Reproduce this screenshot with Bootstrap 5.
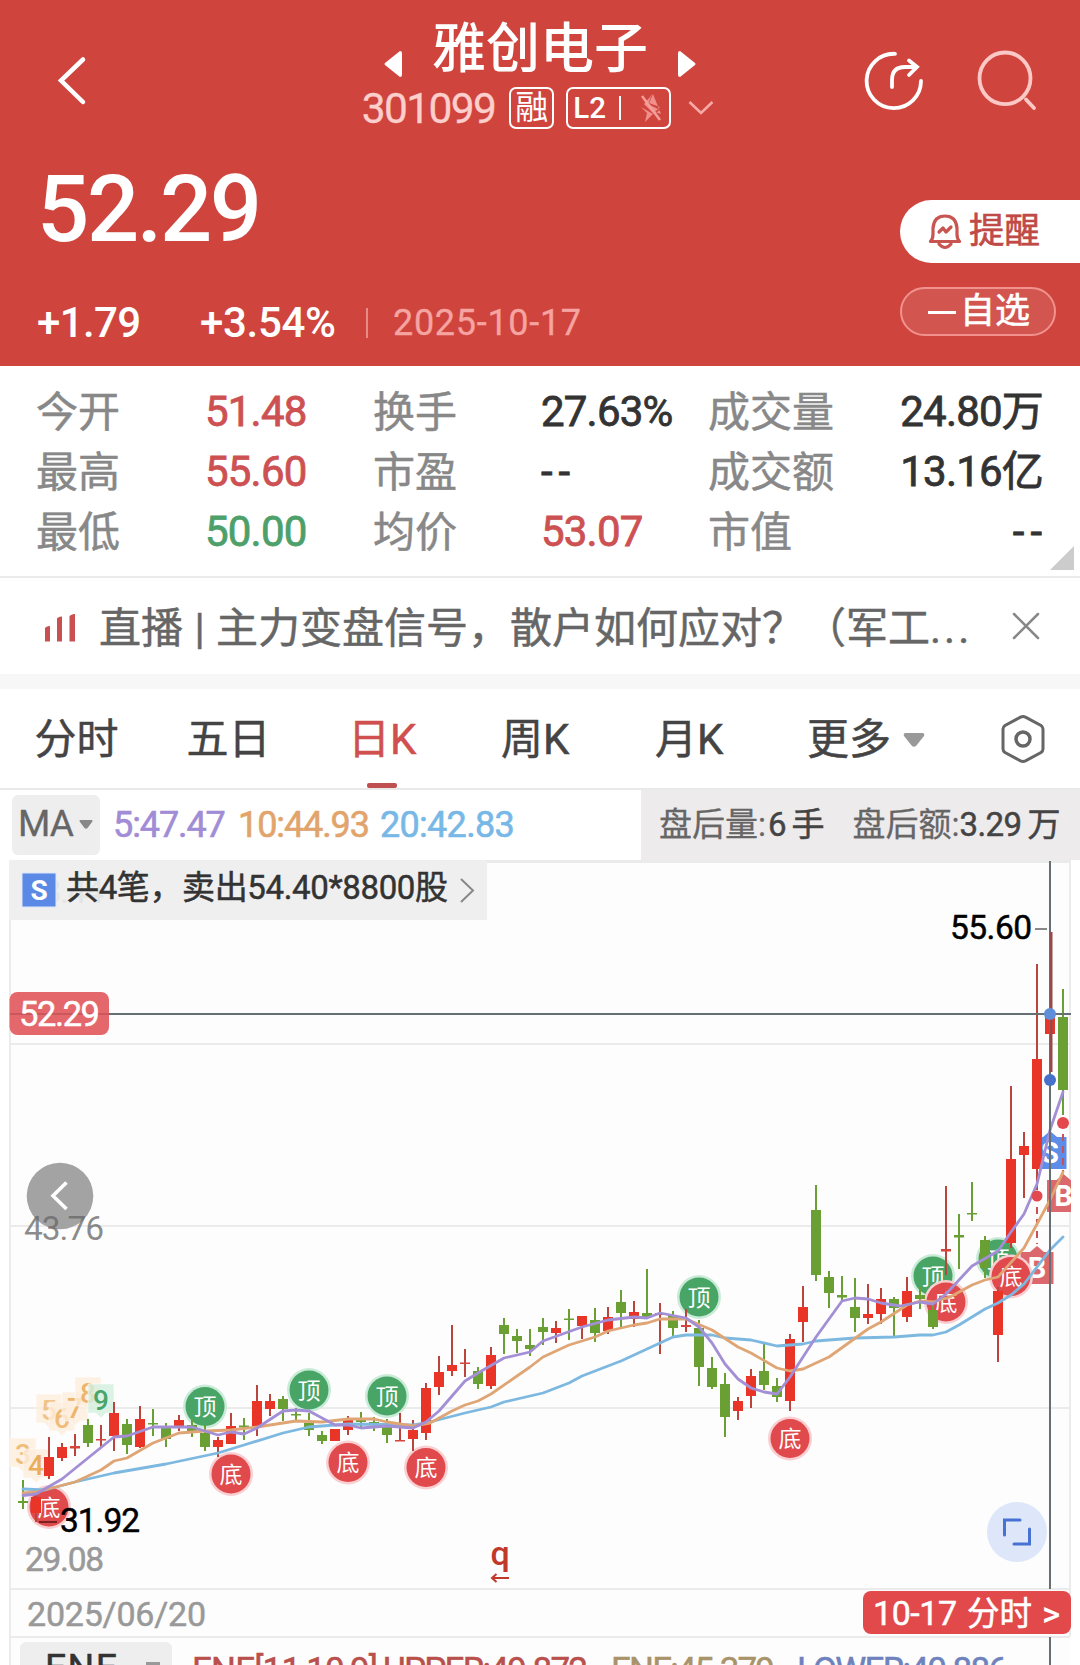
<!DOCTYPE html>
<html lang="zh-CN">
<head>
<meta charset="utf-8">
<meta name="viewport" content="width=device-width, initial-scale=1">
<title>雅创电子 301099</title>
<link rel="stylesheet" href="https://cdn.jsdelivr.net/npm/bootstrap@5.3.0/dist/css/bootstrap.min.css">
<style>
body{font-family:Roboto,"Noto Sans CJK SC",sans-serif;width:1080px;height:1665px;overflow:hidden;background:#fff;color:#333}
svg{display:block;flex:none}
svg text{font-family:Roboto,"Noto Sans CJK SC",sans-serif}
.hero{height:366px;background:#cf453e;color:#fff}
.hero-top{display:grid;grid-template-columns:1fr auto 1fr;height:150px}
.stock-name{font-size:54px;line-height:64px;font-weight:500}
.code{font-size:42.5px;line-height:44px;height:42px;color:#fccfcc;letter-spacing:-1.6px;-webkit-text-stroke:.3px #fccfcc}
.tagbox{height:42px;border:2px solid #fff;border-radius:7px;line-height:38px}
.price{font-size:92px;line-height:92px;font-weight:500;letter-spacing:-2.4px}
.delta{font-size:42px;line-height:42px;font-weight:500;letter-spacing:-.6px}
.day{font-size:36px;line-height:42px;color:#f5a4a1;letter-spacing:.7px;-webkit-text-stroke:.3px #f5a4a1}
.remind{width:180px;height:63px;border-radius:32px 0 0 32px;background:#fff;color:#c04a45;font-size:35.5px;line-height:65px;-webkit-text-stroke:.6px #c04a45}
.fav{width:156px;height:49px;border:2px solid #f1928f;border-radius:25px;background:#d2554f;font-size:35px;line-height:43px;-webkit-text-stroke:.6px #fff}
.quotes{display:grid;grid-template-columns:169px 168px 168px 167px 1fr auto;grid-auto-flow:column;grid-template-rows:repeat(3,60px);height:212px;padding:16px 37px 0 36px;border-bottom:2px solid #ebebeb;font-size:42px;line-height:60px;position:relative;-webkit-text-stroke:.5px}
.quotes>*{white-space:nowrap}
.ql{color:#888;line-height:62px;height:60px}
.qv{letter-spacing:-.8px;color:#333;-webkit-text-stroke:.8px}
.up{color:#cd5152}.down{color:#4ea06a}
.fold{position:absolute;right:6px;bottom:6px}
.live{height:96px;font-size:42px;color:#666;-webkit-text-stroke:.5px #666}
.live-text{line-height:96px;height:90px;margin-left:-1px}
.band{height:15px;background:#f7f7f7}
.tabs{height:101px;border-bottom:2px solid #e9e9e9;font-size:42px;line-height:102px;color:#444;-webkit-text-stroke:.5px}
.tabs .on{color:#d0504f;position:relative}
.tabs .on::after{content:"";position:absolute;left:19px;bottom:0;width:30px;height:5px;border-radius:2px;background:#c0504f}
.marow{height:70px}
.mabtn{width:88px;height:60px;margin:5px 0 0 12px;background:#eee;border-radius:6px;font-size:37px;line-height:58px;color:#666;-webkit-text-stroke:.3px #666}
.mav{font-size:36px;line-height:70px;-webkit-text-stroke:.6px}
.after{width:439px;background:#eeebec;font-size:33px;line-height:70px;color:#666;white-space:nowrap;-webkit-text-stroke:.3px}
.after b{font-weight:400;color:#444;-webkit-text-stroke:.5px}
</style>
<script src="https://cdn.jsdelivr.net/npm/bootstrap@5.3.0/dist/js/bootstrap.bundle.min.js"></script>
</head>
<body>
<header class="hero d-flex flex-column">
  <div class="hero-top">
    <div class="d-flex"><svg width="40" height="60" class="ms-5" style="margin-top:50px" viewBox="48 51 40 60" fill="none" stroke="#fff" stroke-width="4.5" stroke-linecap="round"><path d="M83 60.500 61 81.500 83 103"/></svg></div>
    <div class="d-flex flex-column align-items-center">
      <div class="d-flex stock-name align-items-start" style="margin-top:18px">
        <svg width="18" height="26" style="margin:33px 30px 0 0"><path d="M16 0Q18 0 18 2V24Q18 26 16 26L1 14Q0 13 1 12Z" fill="#fff"/></svg>
        <span style="height:60px">雅创电子</span>
        <svg width="18" height="26" style="margin:33px 0 0 30px"><path d="M2 0Q0 0 0 2V24Q0 26 2 26L17 14Q18 13 17 12Z" fill="#fff"/></svg>
      </div>
      <div class="d-flex align-items-center" style="margin:9px 4px 0 0">
        <span class="code">301099</span>
        <span class="tagbox text-center" style="width:45px;margin-left:14px;font-size:33px">融</span>
        <span class="tagbox d-flex align-items-center" style="width:105px;margin-left:12px;padding-left:5px;font-size:29.500px;font-weight:500"><span>L2</span>
          <svg width="60" height="34" viewBox="606 91 60 34"><path d="M620 96v24" stroke="#fff" stroke-width="2"/><path d="M653 94 649 103 660 107 655 112 661 114M641 107 647 113 645 122 653 114 641 107ZM652 94 648 104 660 110 654 114 644 104 650 97Z" fill="#f08f8b"/><path d="M642 96 660 120" stroke="#f49f9b" stroke-width="2.500"/></svg></span>
        <svg width="26" height="16" style="margin-left:17px" fill="none" stroke="#f7aaa7" stroke-width="2.500"><path d="M1.500 2 13 13 24.500 2"/></svg>
      </div>
    </div>
    <div class="d-flex justify-content-end">
      <svg width="180" height="80" style="margin:40px 38px 0 0" viewBox="862 40 180 80" fill="none" stroke="#fff" stroke-width="3.800" stroke-linecap="round"><path d="M895 53.800A27.200 27.200 0 1 0 921 81M892 87V80Q892 67 905 67H916M909 60.500 917 67 909 75"/><g stroke="#fcc8c5"><ellipse cx="1005" cy="78.300" rx="25.500" ry="25.800"/><path d="M1026 99.500 1034 108"/></g></svg>
    </div>
  </div>
  <div class="d-flex justify-content-between flex-grow-1">
    <div style="padding-left:37px">
      <div class="price" style="margin-top:14px">52.29</div>
      <div class="d-flex align-items-center" style="margin:46px 0 0 0">
        <span class="delta" style="width:163px">+1.79</span><span class="delta" style="width:166px;letter-spacing:-.3px">+3.54%</span>
        <span style="width:2px;height:30px;background:#e88b87;margin-right:25px"></span><span class="day">2025-10-17</span>
      </div>
    </div>
    <div>
      <div class="remind d-flex align-items-center" style="margin-top:50px">
        <svg width="34" height="36" viewBox="0 0 34 36" style="margin:1px 7px 0 28px" fill="none" stroke="#c85550" stroke-width="3.200" stroke-linecap="round" stroke-linejoin="round"><path d="M2.500 27.500Q5 25 5 20V14Q6 2 17 2T29 14V20Q29 25 31.500 27.500ZM11 30Q17 37 23 30M11 18 15 14 18 18 23 13"/></svg><span>提醒</span>
      </div>
      <div class="fav d-flex align-items-center" style="margin-top:24px">
        <span style="width:28px;height:3.500px;background:#fff;margin:2px 4px 0 26px"></span><span>自选</span>
      </div>
    </div>
  </div>
</header>

<section class="quotes">
  <span class="ql">今开</span><span class="ql">最高</span><span class="ql">最低</span>
  <span class="qv up">51.48</span><span class="qv up">55.60</span><span class="qv down">50.00</span>
  <span class="ql">换手</span><span class="ql">市盈</span><span class="ql">均价</span>
  <span class="qv">27.63%</span><span class="qv" style="letter-spacing:6px">--</span><span class="qv up">53.07</span>
  <span class="ql">成交量</span><span class="ql">成交额</span><span class="ql">市值</span>
  <span class="qv text-end">24.80万</span><span class="qv text-end">13.16亿</span><span class="qv text-end" style="letter-spacing:6px;margin-right:-5px">--</span>
  <svg class="fold" width="24" height="24"><path d="M24 0V24H0Z" fill="#ccc"/></svg>
</section>

<section class="live d-flex align-items-center">
  <svg width="32" height="28" style="margin:4px 23px 0 45px" fill="#c95050"><path d="M0 14.500Q0 12.500 5 12V27.500H0ZM12 5Q12 3 17 2.500V27.500H12ZM24.500 2.500Q25 .5 30 0V27.500H24.500Z"/></svg>
  <span class="live-text text-nowrap">直播<span style="display:inline-block;width:33px;text-align:center">|</span>主力变盘信号，散户如何应对？（军工<span style="letter-spacing:3px">...</span></span>
  <svg width="28" height="28" style="margin:0 40px 0 auto" stroke="#888" stroke-width="2.500" stroke-linecap="round"><path d="M2 2 26 26M26 2 2 26"/></svg>
</section>
<div class="band"></div>

<nav class="tabs d-flex" style="padding-left:34.500px">
  <span style="width:152px">分时</span><span style="width:161.500px">五日</span><span class="on" style="width:153px">日K</span><span style="width:154px">周K</span><span style="width:152px">月K</span><span>更多</span>
  <svg width="22" height="14" style="margin:44px 0 0 12px"><path d="M2 0H20Q22 1 21 3L13 13Q11 14.500 9 13L1 3Q0 1 2 0Z" fill="#999"/></svg>
  <svg width="44" height="50" style="margin:25px 35px 0 auto" viewBox="0 0 44 50" fill="none" stroke="#666" stroke-width="3"><path d="M19.500 3.200Q22 2 24.500 3.200L40 11.500Q42 13 42 15V35Q42 37 40 38.500L24.500 46.800Q22 48 19.500 46.800L4 38.500Q2 37 2 35V15Q2 13 4 11.500Z"/><circle cx="22" cy="25" r="7" stroke-width="3.500"/></svg>
</nav>

<section class="marow d-flex">
  <div class="mabtn d-flex"><span style="margin:0 4px 0 6px;width:57px;letter-spacing:-.8px">MA</span><svg width="14" height="9" style="margin-top:25px"><path d="M1 0H13Q14 1 13 2L8.500 8Q7 9.500 5.500 8L1 2Q0 1 1 0Z" fill="#888"/></svg></div>
  <span class="mav" style="color:#a18cd6;width:125px;margin-left:13px;letter-spacing:-1.1px">5:47.47</span><span class="mav" style="color:#e2a46d;width:142px;letter-spacing:-1.1px">10:44.93</span><span class="mav" style="color:#78b8e6;letter-spacing:-.7px">20:42.83</span>
  <div class="after d-flex ms-auto" style="padding-left:18px"><span>盘后量:</span><b style="margin-left:2px">6</b><b style="margin:0 28px 0 5px">手</b><span>盘后额:</span><b style="letter-spacing:-.6px">3.29</b><b style="margin-left:6px">万</b></div>
</section>

<svg id="chart" width="1080" height="805" viewBox="0 860 1080 805" role="img" aria-label="日K线"></svg>

<script>
const R='#e93528',G='#6a9f33';
// [colour, high, low, body top, body bottom] for each session, in chart units
const bars=[
['g',1480,1509,1501,1503],['r',1490,1522,1497,1513],['r',1437,1479,1457,1476],['r',1443,1461,1447,1458],['r',1434,1456,1446,1448.5],['g',1419,1447,1425,1443],['r',1425,1447,1439,1440.5],['r',1402,1451,1413,1436],['g',1419,1454,1424,1445],['r',1406,1448,1419,1447],
['g',1409,1436,1423,1424.5],['g',1423,1447,1428,1439],['r',1415,1431,1420,1426],['g',1420,1437,1425,1432],['g',1425,1451,1433,1447],['r',1437,1457,1440,1447],['r',1413,1444,1426,1444],['g',1418,1440,1425.5,1427.5],['r',1385,1436,1401,1426],['r',1394,1416,1401,1409],
['g',1396,1421,1399,1409],['g',1408,1421,1414,1415.5],['g',1413,1436,1423,1430],['g',1431,1444,1435,1441],['r',1429,1441,1429,1441],['r',1416,1435,1420,1430],['g',1412,1427,1420,1422],['g',1417,1431,1422,1424],['g',1419,1443,1427,1435],['r',1413,1441,1440,1441.5],
['r',1420,1451,1430,1439],['r',1383,1440,1388,1433],['r',1356,1395,1372,1387],['r',1325,1376,1365,1371],['r',1349,1377,1362.5,1364],['g',1367,1389,1371,1384],['r',1347,1389,1355,1386],['g',1318,1354,1325,1334],['g',1329,1353,1336,1341],['g',1329,1356,1345,1349],
['g',1318,1345,1327,1332],['r',1321,1343,1328,1333],['g',1309,1340,1318.5,1320],['r',1316,1339,1316,1326],['g',1308,1342,1320,1333],['r',1307,1334,1317,1331],['g',1290,1327,1302,1313],['r',1301,1327,1312,1319],['g',1269,1317,1313,1317],['r',1303,1354,1313,1315],
['g',1311,1337,1315,1328],['r',1309,1332,1325,1327],['g',1320,1386,1328,1367],['g',1357,1389,1368,1387],['g',1373,1437,1384,1417],['r',1397,1420,1401,1411],['r',1369,1408,1376,1396],['g',1344,1390,1371,1385],['g',1378,1402,1386,1397],['r',1334,1411,1339,1401],
['r',1286,1342,1307,1322],['g',1185,1281,1210,1275],['g',1271,1308,1277,1293],['g',1276,1301,1295,1297.5],['g',1278,1332,1307,1318],['r',1284,1324,1314,1318],['r',1288,1324,1299,1314],['g',1297,1337,1299,1308],['r',1277,1322,1291,1317],['g',1287,1309,1295,1299],
['g',1303,1329,1310,1327],['r',1186,1275,1249,1251.5],['g',1214,1269,1235,1237.5],['g',1182,1221,1213,1214.5],['g',1236,1278,1240,1268],['r',1287,1362,1291,1335],['r',1086,1248,1159,1243],['r',1132,1198,1146,1155],['r',964,1190,1059,1169],['r',932,1072,1015,1034],['g',989,1115,1017,1090]];
const ma5='23,1495.5 36,1494 62,1479 114,1437 127,1436 153,1427 192,1427 218,1435 231,1432 244,1434 257,1428 283,1411 296,1410 309,1411 335,1425 348,1425 361,1428 387,1426 413,1428 426,1422 439,1411 465,1381 478,1373 504,1358 530,1352 543,1341 582,1327 608,1320 634,1317 647,1318 660,1313 686,1318 699,1327 712,1343 725,1364 738,1379 751,1388 764,1392 777,1394 790,1377 816,1337 842,1301 855,1298 868,1299 881,1303 900,1306 920,1302 933,1304 946,1294 972,1266 998,1251 1011,1232 1024,1214 1037,1184 1050,1130 1063,1092';
const ma10='23,1493 36,1492 75,1482 101,1470 114,1461 127,1458 153,1443 179,1433 205,1431 231,1430 257,1427 296,1421 322,1422 348,1419 374,1419 387,1422 413,1426 430,1423 452,1411 465,1405 478,1401 491,1394 530,1367 543,1357 569,1345 595,1337 608,1331 634,1325 647,1323 660,1319 686,1319 712,1330 738,1347 751,1353 777,1368 790,1371 803,1369 829,1357 868,1329 881,1322 907,1305 920,1301 933,1302 950,1297 972,1285 985,1280 998,1277 1024,1248 1050,1200 1063,1172';
const ma20='23,1489 45,1490 75,1482 114,1473 166,1464 218,1453 244,1445 283,1433 309,1427 348,1424 413,1425 426,1423 465,1413 491,1407 504,1402 543,1393 569,1383 582,1376 621,1361 660,1343 673,1337 686,1335 712,1335 725,1338 751,1340 777,1346 803,1344 816,1341 855,1338 894,1337 920,1335 933,1335 946,1332 959,1325 985,1309 998,1303 1011,1295 1024,1284 1050,1250 1063,1237';
const text=(x,y,s,size,len,fill,extra='')=>`<text x="${x}" y="${y}" font-size="${size}" fill="${fill}" ${len?`textLength="${len}"`:''} ${extra}>${s}</text>`;
const rect=(x,y,w,h,f,e='')=>`<rect x="${x}" y="${y}" width="${w}" height="${h}" fill="${f}" ${e}/>`;
const thick=c=>`stroke="${c}" stroke-width=".5"`;
let o='';
// frame and grid
o+=rect(11,863,1059,802,'#fdfdfd');
o+=`<path d="M10 861.5H1071" stroke="#ebebeb" stroke-width="3"/><path d="M10 861V1665M1070 861V1636M10 1044H1070M10 1226H1070M10 1408H1070M10 1589H1070M10 1637H1070" stroke="#ebebeb" stroke-width="2" fill="none"/>`;
// round page-back button with the mid-scale price under it
o+=`<circle cx="60" cy="1196" r="33.3" fill="#a3a3a3"/><path d="M66.500 1182.500 53 1195.800 66.500 1209" fill="none" stroke="#fff" stroke-width="3.600"/>`;
o+=text(24,1240,'43.76',33.5,80,'#666','fill-opacity=".75"');
// nine-count flags
const flag=(x,y,n,c,b,op)=>`<path d="M${x-13} ${y-17}H${x+13}V${y+12}H${x+5}L${x} ${y+17} ${x-5} ${y+12}H${x-13}Z" fill="${b}" fill-opacity=".8" stroke="#fff" stroke-opacity=".5"/>`+text(x,y+9,n,28,0,c,`text-anchor="middle" font-weight="500" opacity="${op}"`);
o+=flag(23,1455,'3','#eaa64e','#fdeedd',.7)+flag(36,1466,'4','#eaa64e','#fdeedd',.9)+flag(49,1411,'5','#eaa64e','#fdeedd',.6)+flag(62,1419,'6','#eaa64e','#fdeedd',.7)+flag(75,1409,'7','#eaa64e','#fdeedd',.8)+flag(88,1394,'8','#eaa64e','#fdeedd',.8)+flag(101,1401,'9','#4aa56a','#d3efdf',1);
// top / bottom signals
const sig=(x,y,top)=>`<circle cx="${x}" cy="${y}" r="22" fill="${top?'#c9ebd7':'#f9cfd1'}"/><circle cx="${x}" cy="${y}" r="19.500" fill="${top?'#48a566':'#e04a4d'}"/>`+text(x,y+8.5,top?'顶':'底',23,0,'#fff','text-anchor="middle"');
[[205,1406.5],[309,1390],[387,1396],[699,1297],[933,1276],[998,1259]].forEach(p=>o+=sig(p[0],p[1],true));
const buy=(x,y,s,f)=>`<path d="M${x-16.5} ${y+4}H${x-7}L${x} ${y-2} ${x+7} ${y+4}H${x+16.5}V${y+36}H${x-16.5}Z" fill="${f}"/>`+text(x,y+30,s,29,0,'#fff','text-anchor="middle" font-weight="700"');
o+=`<svg x="0" y="860" width="1071" height="805" viewBox="0 860 1071 805">`+buy(1037,1248,'B','#da686d')+buy(1063.5,1176,'B','#da686d')+buy(1050,1133,'S','#5c8de8')+`</svg>`;
[[49,1507],[231,1474],[348,1462.5],[426,1467.5],[790,1438.5],[946,1302],[1011,1276.5]].forEach(p=>o+=sig(p[0],p[1],false));
o+=`<path d="M1063 1134V1172M1037 1207V1244" stroke="#c85058" stroke-width="2" stroke-dasharray="7 5"/>`;
// candles, 13 units apart
bars.forEach((b,i)=>{const x=23+13*i,r=b[0]=='r',thin=b[4]-b[3]<3;
 o+=rect(x-1,b[1],2,b[2]-b[1],r?'#b9453d':G)+rect(x-5,b[3],10,b[4]-b[3],r?(thin?'#d6453c':R):G);});
[[ma20,'#7cb8e0'],[ma10,'#dfa574'],[ma5,'#a38fd5']].forEach(m=>o+=`<polyline points="${m[0]}" fill="none" stroke="${m[1]}" stroke-width="2.800" stroke-linejoin="round" stroke-linecap="round"/>`);
o+=`<circle cx="1063" cy="1123" r="6" fill="#e2484d"/><circle cx="1037" cy="1196" r="5.500" fill="#e2484d"/>`;
// low / high labels
o+=rect(39,1521,18,2,'#7a2222')+text(60,1532,'31.92',33.5,80,'#000',thick('#000'))+text(25,1571,'29.08',33.5,79,'#999',thick('#999'));
o+=text(950,939,'55.60',33.5,82,'#000',thick('#000'))+rect(1035,928,12,2,'#888');
// crosshair
o+=`<path d="M10 1014H1071M1050 861V1589M1050 1637V1665" stroke="#667074" stroke-width="2"/>`+rect(1050,932,2.5,140,'#95494a')+`<circle cx="1050" cy="1014" r="6" fill="#5f8fd8"/><circle cx="1050" cy="1080" r="6" fill="#4870c9"/>`;
o+=rect(9.5,992,99.5,43,'#e4676b','rx="8"')+rect(10,1013,99,2,'#c9575b')+text(19,1026,'52.29',34.5,81,'#fff',thick('#fff'));
// trade summary strip
o+=rect(9,860,478,60,'#efefef')+text(25,903,'58.44',33.5,79,'#e4e4e4')+rect(22,873,34,34,'#5b89e6','stroke="#dfe8fb"')+text(39,900,'S',28,0,'#fff','text-anchor="middle" font-weight="700"');
o+=text(66,899,'共4笔，卖出54.40*8800股',33,382,'#333',thick('#333'))+`<path d="M461 879 473 890.500 461 902" fill="none" stroke="#888" stroke-width="2"/>`;
// keyboard mark
o+=text(500,1565,'q',34,0,'#c0392b','text-anchor="middle" font-weight="500"')+`<path d="M509 1578H492M496.500 1574 492 1578 496.500 1582" fill="none" stroke="#c0392b" stroke-width="2"/>`;
// expand button
o+=`<circle cx="1017" cy="1532" r="30" fill="#dee7f9"/><path d="M1020 1520H1004.500V1535M1029.500 1529V1544H1014" fill="none" stroke="#4672d4" stroke-width="3" stroke-linecap="round"/>`;
// date row
o+=text(27,1626,'2025/06/20',34,179,'#999',thick('#999'))+rect(863,1591,208,43,'#e1494b','rx="8"')+text(873,1625,'10-17',34,84,'#fff',thick('#fff'))+text(967,1625,'分时',32.5,65,'#fff',thick('#fff'))+text(1042,1626,'&gt;',35,0,'#fff','font-weight="500"');
// next indicator, cut by the fold
o+=rect(20,1642,152,40,'#eee','rx="6"')+text(45,1680,'ENE',37.5,72,'#333',thick('#333'))+rect(146,1662,14,3,'#999')+text(192,1682,'ENE[11,10,9]',35,186,'#b9504c',thick('#b9504c'))+text(383,1682,'UPPER:49.872',35,205,'#b9504c',thick('#b9504c'))+text(611,1682,'ENE:45.379',35,164,'#a8936a',thick('#a8936a'))+text(797,1682,'LOWER:40.886',35,211,'#6e82bd',thick('#6e82bd'));
document.getElementById('chart').innerHTML=o;
</script>
</body>
</html>
